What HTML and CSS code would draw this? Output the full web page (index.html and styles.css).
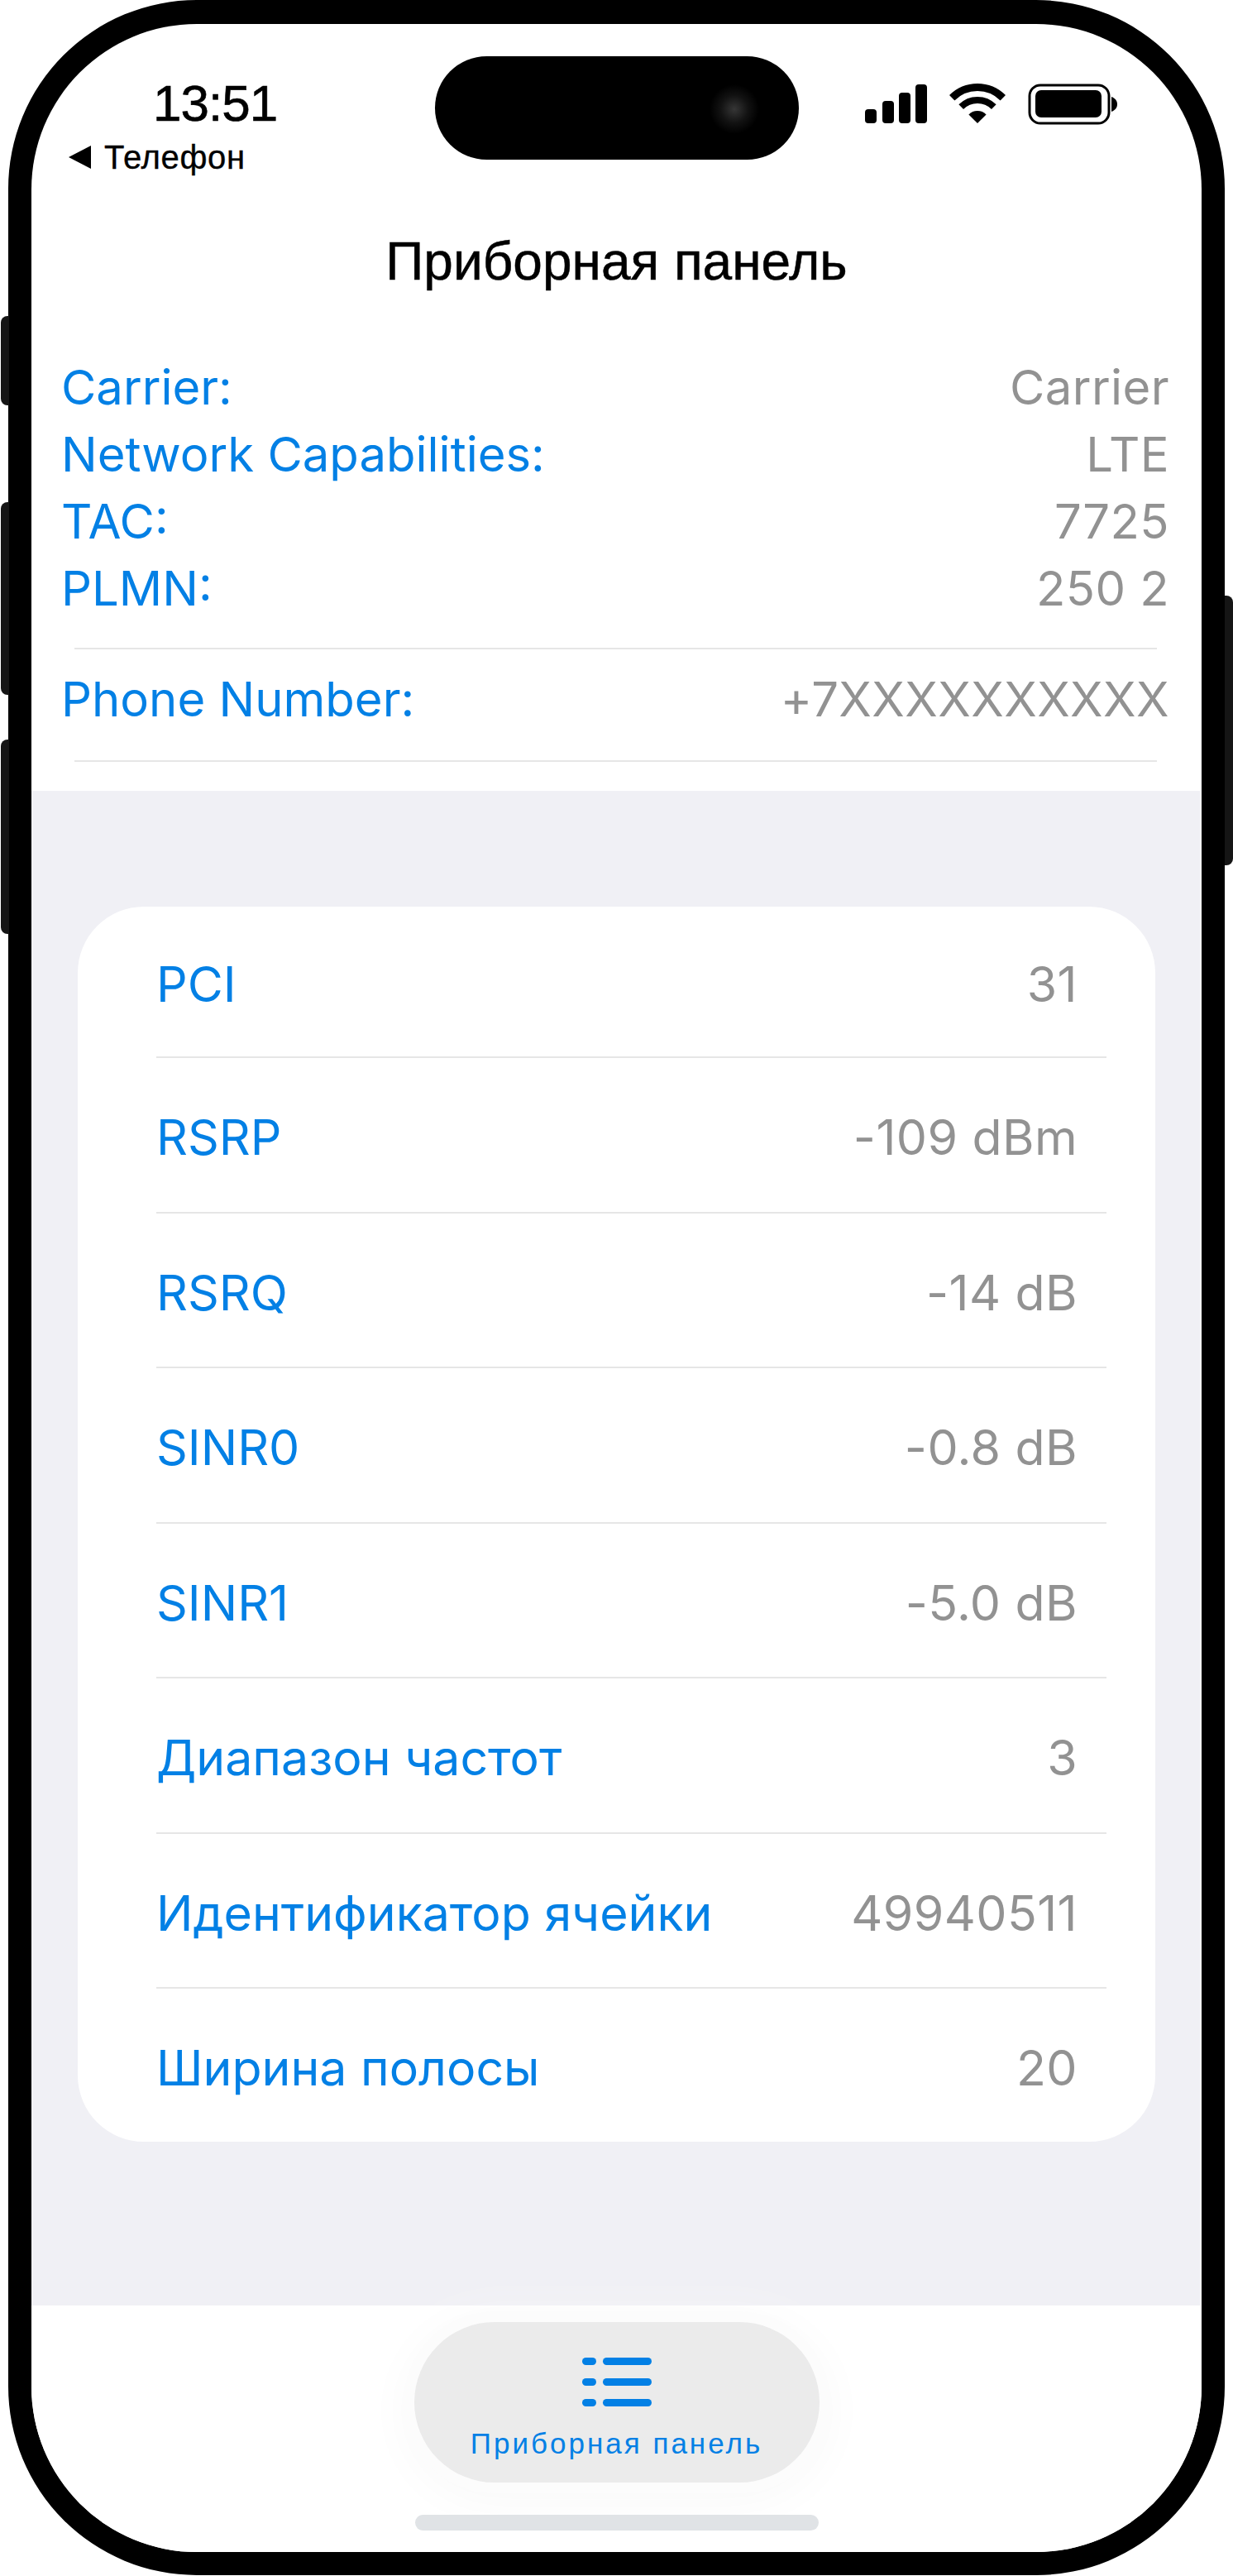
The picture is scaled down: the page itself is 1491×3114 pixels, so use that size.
FILE: index.html
```html
<!DOCTYPE html>
<html lang="ru">
<head>
  <meta charset="UTF-8">
  <meta name="viewport" content="width=device-width, initial-scale=1.0">
  <title>Приборная панель</title>
  <link rel="stylesheet" href="styles.css">
</head>
<body>
  <div class="phone">
    <span class="side-btn btn-mute"></span>
    <span class="side-btn btn-up"></span>
    <span class="side-btn btn-down"></span>
    <span class="side-btn btn-power"></span>

    <div class="screen">
      <div class="status-bar">
        <div class="status-left">
          <div class="time">13:51</div>
          <div class="back"><span class="back-arrow"></span>Телефон</div>
        </div>
        <div class="island"><span class="camera"></span></div>
        <svg class="status-icons" width="306" height="51" viewBox="0 0 306 51">
          <rect x="0" y="32" width="14" height="17" rx="4"/>
          <rect x="21" y="22" width="14" height="27" rx="4"/>
          <rect x="41" y="12" width="14" height="37" rx="4"/>
          <rect x="61" y="2" width="14" height="47" rx="4"/>
          <path d="M105.2 18.2A43.5 43.5 0 0 1 166.8 18.2" fill="none" stroke="#000" stroke-width="9"/>
          <path d="M116.2 29.2A28 28 0 0 1 155.8 29.2" fill="none" stroke="#000" stroke-width="8"/>
          <path d="M136 49L125.4 38.4A15 15 0 0 1 146.6 38.4Z"/>
          <rect x="199" y="3" width="96" height="46" rx="13" fill="none" stroke="#000" stroke-width="3"/>
          <rect x="206" y="9" width="80" height="33" rx="7"/>
          <path d="M298 17C303 19 305 22 305 26C305 30 303 33 298 35Z"/>
        </svg>
      </div>

      <h1 class="title">Приборная панель</h1>

      <div class="info">
        <div class="info-row"><span class="label">Carrier:</span><span class="value">Carrier</span></div>
        <div class="info-row"><span class="label">Network Capabilities:</span><span class="value">LTE</span></div>
        <div class="info-row"><span class="label">TAC:</span><span class="value">7725</span></div>
        <div class="info-row"><span class="label">PLMN:</span><span class="value">250 2</span></div>
        <div class="info-phone">
          <div class="info-row"><span class="label">Phone Number:</span><span class="value">+7XXXXXXXXXX</span></div>
        </div>
      </div>

      <div class="content">
        <div class="card">
          <div class="card-row"><span class="label">PCI</span><span class="value">31</span></div>
          <div class="card-row"><span class="label">RSRP</span><span class="value">-109 dBm</span></div>
          <div class="card-row"><span class="label">RSRQ</span><span class="value">-14 dB</span></div>
          <div class="card-row"><span class="label">SINR0</span><span class="value">-0.8 dB</span></div>
          <div class="card-row"><span class="label">SINR1</span><span class="value">-5.0 dB</span></div>
          <div class="card-row"><span class="label">Диапазон частот</span><span class="value">3</span></div>
          <div class="card-row"><span class="label">Идентификатор ячейки</span><span class="value">49940511</span></div>
          <div class="card-row"><span class="label">Ширина полосы</span><span class="value">20</span></div>
        </div>
      </div>

      <div class="tabbar">
        <div class="tab">
          <svg class="tab-icon" width="84" height="59" viewBox="0 0 84 59">
            <rect x="0" y="0" width="17" height="9" rx="4.5"/>
            <rect x="25" y="0" width="59" height="9" rx="4.5"/>
            <rect x="0" y="25" width="17" height="9" rx="4.5"/>
            <rect x="25" y="25" width="59" height="9" rx="4.5"/>
            <rect x="0" y="50" width="17" height="9" rx="4.5"/>
            <rect x="25" y="50" width="59" height="9" rx="4.5"/>
          </svg>
          <span class="tab-label">Приборная панель</span>
        </div>
        <div class="home-bar"></div>
      </div>
    </div>
  </div>
</body>
</html>
```

FILE: styles.css
```css
* {
  box-sizing: border-box;
}

body {
  margin: 0;
  width: 1491px;
  height: 3114px;
  overflow: hidden;
  background-color: #fff;
  font-family: "Liberation Sans", Arial, sans-serif;
}

.phone {
  position: relative;
  width: 1471px;
  height: 3113px;
  margin-left: 10px;
  border: 28px solid #000;
  border-top-width: 29px;
  border-radius: 228px;
  background-color: #000;
}

.side-btn {
  position: absolute;
  width: 10px;
  background-color: #151515;
}

.btn-mute {
  left: -37px;
  top: 353px;
  height: 108px;
  border-radius: 8px 0 0 8px;
}

.btn-up {
  left: -37px;
  top: 578px;
  height: 233px;
  border-radius: 8px 0 0 8px;
}

.btn-down {
  left: -37px;
  top: 865px;
  height: 235px;
  border-radius: 8px 0 0 8px;
}

.btn-power {
  right: -38px;
  top: 691px;
  height: 326px;
  border-radius: 0 8px 8px 0;
}

.screen {
  display: flex;
  flex-direction: column;
  height: 100%;
  overflow: hidden;
  border-radius: 200px;
  background-color: #fff;
}

/* status bar */
.status-bar {
  display: flex;
  align-items: flex-start;
  flex: none;
  height: 255px;
  padding: 39px 0 0 44px;
}

.status-left {
  width: 444px;
  margin-top: 22px;
}

.time {
  margin-left: 103px;
  font-size: 62px;
  line-height: 70px;
  letter-spacing: -1px;
  color: #000;
  -webkit-text-stroke: 0.6px #000;
}

.back {
  display: flex;
  align-items: center;
  gap: 16px;
  margin: 8px 0 0 1px;
  font-size: 40px;
  line-height: 44px;
  letter-spacing: 0.7px;
  color: #000;
  -webkit-text-stroke: 0.4px #000;
}

.back-arrow {
  width: 0;
  height: 0;
  border-top: 14px solid transparent;
  border-bottom: 14px solid transparent;
  border-right: 27px solid #000;
}

.island {
  position: relative;
  flex: none;
  width: 440px;
  height: 125px;
  border-radius: 63px;
  background-color: #000;
}

.camera {
  position: absolute;
  top: 33px;
  right: 47px;
  width: 62px;
  height: 62px;
  border-radius: 50%;
  background: radial-gradient(circle, #363636 0%, #121212 38%, #000 68%);
}

.status-icons {
  flex: none;
  margin: 32px 0 0 80px;
}

.title {
  flex: none;
  margin: 0;
  font-size: 64px;
  line-height: 64px;
  font-weight: 400;
  text-align: center;
  color: #000;
  -webkit-text-stroke: 0.5px #000;
}

/* carrier info */
.label {
  color: #0380e5;
}

.value {
  color: #929292;
  letter-spacing: 0.4px;
}

.info {
  flex: none;
  padding: 80px 39px 35px 36px;
  font-family: Inter, "Liberation Sans", sans-serif;
  font-size: 58px;
}

.info-row {
  display: flex;
  justify-content: space-between;
  height: 81px;
  line-height: 81px;
}

.info-phone {
  margin: 31px 15px 0 16px;
  padding: 20px 0 33px;
  border-top: 2px solid #e6e6e6;
  border-bottom: 2px solid #e6e6e6;
}

.info-phone .info-row {
  margin: 0 -15px 0 -16px;
}

/* cell values */
.content {
  flex: 1;
  margin-right: 2px;
  padding: 140px 54px 0 56px;
  background-color: #f0f0f5;
}

.card {
  padding: 0 59px 0 95px;
  border-radius: 80px;
  background-color: #fff;
  font-family: Inter, "Liberation Sans", sans-serif;
  font-size: 59px;
}

.card-row {
  display: flex;
  justify-content: space-between;
  align-items: center;
  height: 187.5px;
  padding: 6px 35px 0 0;
  border-bottom: 2px solid #e6e6e6;
}

.card-row:first-child {
  height: 183px;
}

.card-row:last-child {
  height: 185px;
  border-bottom: none;
}

/* bottom tab */
.tabbar {
  display: flex;
  flex-direction: column;
  align-items: center;
  flex: 0 0 298px;
  padding-top: 20px;
  background-color: #fff;
}

.tab {
  display: flex;
  flex-direction: column;
  align-items: center;
  width: 490px;
  height: 194px;
  padding-top: 43px;
  border-radius: 97px;
  background-color: #ebebeb;
  box-shadow: 0 0 0 13px #fcfcfc, 0 10px 60px 10px #f8f8f8;
}

.tab-icon {
  fill: #0380e5;
}

.tab-label {
  margin-top: 25px;
  font-size: 35px;
  letter-spacing: 3px;
  white-space: nowrap;
  color: #0380e5;
}

.home-bar {
  width: 488px;
  height: 19px;
  margin-top: 39px;
  border-radius: 10px;
  background-color: #e0e3e6;
}
```
